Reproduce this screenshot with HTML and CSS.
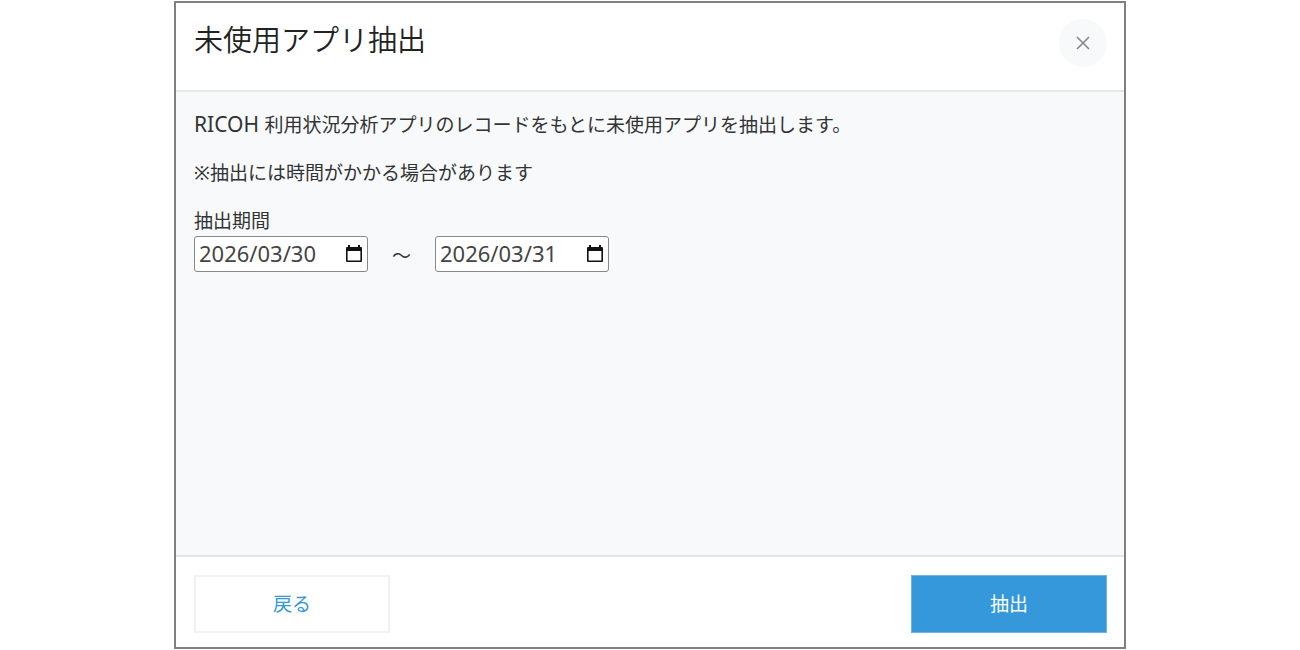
FILE: index.html
```html
<!DOCTYPE html>
<html lang="ja">
<head>
<meta charset="utf-8">
<meta name="viewport" content="width=device-width, initial-scale=1">
<title>未使用アプリ抽出</title>
<link rel="stylesheet" href="styles.css">
</head>
<body>
<main class="dialog" role="dialog" aria-labelledby="dialog-title">
  <header class="dialog-header">
    <h1 class="dialog-title" id="dialog-title">未使用アプリ抽出</h1>
    <button class="close-button" type="button" aria-label="閉じる">
      <svg class="close-icon" viewBox="0 0 14 14" aria-hidden="true"><path d="M1 1L13 13M13 1L1 13"/></svg>
    </button>
  </header>
  <form class="dialog-form">
    <div class="dialog-body">
      <p class="message"><span class="brand">RICOH </span>利用状況分析アプリのレコードをもとに未使用アプリを抽出します。</p>
      <p class="message">※抽出には時間がかかる場合があります</p>
      <label class="period-label" for="start">抽出期間</label>
      <div class="period">
        <div class="date-field">
          <input class="date-input" id="start" type="text" value="2026/03/30">
          <button class="calendar-button" type="button" aria-label="開始日を選択">
            <svg class="calendar-icon" viewBox="0 0 16 18" aria-hidden="true"><path d="M2 2V0h2v2h8V0h2v2h1q1 0 1 1v13q0 1-1 1H1q-1 0-1-1V3q0-1 1-1zM1.6 6v9.4h12.8V6z" fill-rule="evenodd"/></svg>
          </button>
        </div>
        <span class="separator">～</span>
        <div class="date-field">
          <input class="date-input" id="end" type="text" value="2026/03/31" aria-label="抽出期間の終了日">
          <button class="calendar-button" type="button" aria-label="終了日を選択">
            <svg class="calendar-icon" viewBox="0 0 16 18" aria-hidden="true"><path d="M2 2V0h2v2h8V0h2v2h1q1 0 1 1v13q0 1-1 1H1q-1 0-1-1V3q0-1 1-1zM1.6 6v9.4h12.8V6z" fill-rule="evenodd"/></svg>
          </button>
        </div>
      </div>
    </div>
    <footer class="dialog-footer">
      <button class="button" type="button">戻る</button>
      <button class="button button-primary" type="submit">抽出</button>
    </footer>
  </form>
</main>
</body>
</html>
```
FILE: styles.css
```css
* {
  box-sizing: border-box;
}

body {
  margin: 0;
  min-height: 100vh;
  padding: 1px 16px;
  display: flex;
  justify-content: center;
  background: #fff;
  color: #333;
  font-family: "Noto Sans", "Noto Sans CJK JP", sans-serif;
  font-size: 19px;
  line-height: 28px;
}

button,
input {
  font: inherit;
  color: inherit;
}

button {
  cursor: pointer;
}

.dialog {
  flex: 1;
  max-width: 952px;
  display: flex;
  flex-direction: column;
  border: 2px solid #808080;
  background: #fff;
}

.dialog-header {
  display: flex;
  justify-content: space-between;
  align-items: flex-start;
  padding: 16px 17px 23px 18px;
  border-bottom: 2px solid #e3e7e8;
}

.dialog-title {
  margin: 0;
  color: #222;
  font-size: 29px;
  font-weight: 350;
  line-height: 42px;
}

.close-button {
  width: 48px;
  height: 48px;
  padding: 0;
  display: grid;
  place-items: center;
  border: 0;
  border-radius: 50%;
  background: #f7f9fa;
}

.close-icon {
  width: 14px;
  height: 14px;
  fill: none;
  stroke: #888;
  stroke-width: 1.6;
}

.dialog-form {
  flex: 1;
  display: flex;
  flex-direction: column;
}

.dialog-body {
  flex: 1;
  padding: 18px;
  background: #f7f9fb;
}

.message {
  margin: 0 0 20px;
}

.brand {
  font-size: 21px;
  white-space: pre;
}

.period-label {
  display: block;
}

.period {
  display: flex;
  align-items: center;
  gap: 24px;
  padding-top: 1px;
}

.date-field {
  width: 174px;
  height: 36px;
  display: flex;
  align-items: center;
  padding: 0 5px 0 4px;
  border: 1px solid #888;
  border-radius: 3px;
  background: #fff;
}

.date-input {
  flex: 1;
  min-width: 0;
  padding: 0 0 2px;
  border: 0;
  outline: 0;
  background: none;
  color: #444;
  font-size: 22px;
}

.calendar-button {
  padding: 0;
  display: flex;
  border: 0;
  background: none;
}

.calendar-icon {
  width: 16px;
  height: 18px;
  fill: #111;
}

.separator {
  padding-top: 4px;
}

.dialog-footer {
  display: flex;
  justify-content: space-between;
  padding: 18px 17px 14px 18px;
  border-top: 2px solid #e3e7e8;
}

.button {
  width: 196px;
  height: 58px;
  border: 2px solid #f0f1f2;
  background: #fff;
  color: #3498db;
}

.button-primary {
  border: 1px solid #6fb5e5;
  background: #3498db;
  color: #fff;
}
```
